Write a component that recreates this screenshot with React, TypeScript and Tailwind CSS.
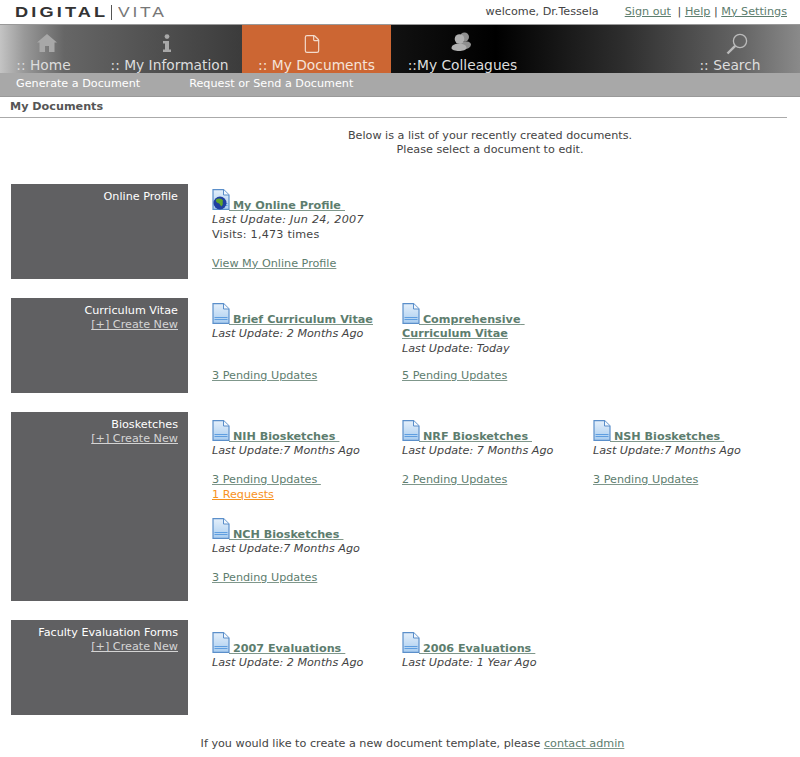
import { File } from 'lucide-react'

// Digital Vita "My Documents" page.

const FONT = "font-['DejaVu_Sans',Verdana,sans-serif]"

function HomeIcon () {
  return (
    <svg viewBox="0 0 20 18" className="ml-[6px] h-[18px] w-[20px] text-[#a8a8a8]" fill="currentColor">
      <path d="M10 0 L20 8.5 L17.5 8.5 L17.5 18 L12 18 L12 12 L8 12 L8 18 L2.5 18 L2.5 8.5 L0 8.5 Z" />
    </svg>
  )
}

function InfoIcon () {
  return (
    <svg viewBox="0 0 10 18" className="mr-[5px] h-[18px] w-[10px] text-[#a8a8a8]" fill="currentColor">
      <circle cx="5" cy="2.6" r="2.4" />
      <path d="M1 7 L7 7 L7 15.5 L9 15.5 L9 18 L1 18 L1 15.5 L3 15.5 L3 9.5 L1 9.5 Z" />
    </svg>
  )
}

function PeopleIcon () {
  return (
    <svg viewBox="0 0 20 20" className="mr-[4px] h-[20px] w-[20px] text-[#b0b0b0]" fill="currentColor">
      <circle cx="13.5" cy="5" r="4.5" fill="#8f8f8f" />
      <path d="M8 12 C9 9 18 8 20 12 C20 16 16 17 14 17 Z" fill="#8f8f8f" />
      <circle cx="8.5" cy="7" r="4.8" />
      <path d="M0.5 16 C0.5 10 15.5 10 15.5 16 C15.5 20 0.5 20 0.5 16 Z" />
    </svg>
  )
}

function SearchIcon () {
  return (
    <svg viewBox="0 0 22 22" className="ml-[14px] h-[22px] w-[22px] text-[#bbb]" fill="none" stroke="currentColor">
      <circle cx="14" cy="8" r="6.6" strokeWidth="1.3" />
      <path d="M9.2 12.8 L1.5 20.5" strokeWidth="2.4" />
    </svg>
  )
}

function DocIcon ({ globe }: { globe?: boolean }) {
  return (
    <svg viewBox="0 0 18 21" className="mr-[-1px] inline h-[21px] w-[18px] align-[-1px]">
      <defs>
        <linearGradient id="docFill" x1="0" y1="0" x2="0" y2="1">
          <stop offset="0" stopColor="#e4effa" />
          <stop offset="1" stopColor="#a9cdf0" />
        </linearGradient>
      </defs>
      <path d="M1 .7 H11.5 L17 6 V20.3 H1 Z" fill="url(#docFill)" stroke="#5b8fca" strokeWidth="1.2" />
      <path d="M11.5 .7 V6 H17" fill="#f3f8fd" stroke="#5b8fca" strokeWidth="1" />
      <path d="M2.5 14.5 H15.5 M2.5 16.5 H15.5" stroke="#5f9ee0" strokeWidth="1" />
      {globe && (
        <g>
          <circle cx="8" cy="14" r="6.5" fill="#1f3fa0" />
          <path d="M4 10.5 C6.5 8.5 10 9.5 11 11.5 C10 13.5 12 15 9.5 17.5 C8 16.5 8 14.5 6 14 C4.5 13.5 3.5 12 4 10.5 Z" fill="#5fa52e" />
        </g>
      )}
    </svg>
  )
}

type Doc = {
  title: string
  update: string
  extra?: string
  links: { text: string; orange?: boolean }[]
  globe?: boolean
  bottom?: boolean // pin links to the row bottom, next to a taller neighbour
}

type Section = {
  name: string
  create: boolean
  height: string
  pad: string
  docs: Doc[]
}

const SECTIONS: Section[] = [
  {
    name: 'Online Profile',
    create: false,
    height: 'min-h-[95px]',
    pad: 'pt-[5px]',
    docs: [
      {
        title: 'My Online Profile ',
        update: 'Last Update: Jun 24, 2007',
        extra: 'Visits: 1,473 times',
        links: [{ text: 'View My Online Profile' }],
        globe: true,
      },
    ],
  },
  {
    name: 'Curriculum Vitae',
    create: true,
    height: 'min-h-[95px]',
    pad: 'pt-[5px]',
    docs: [
      { title: 'Brief Curriculum Vitae', update: 'Last Update: 2 Months Ago', links: [{ text: '3 Pending Updates' }], bottom: true },
      { title: 'Comprehensive Curriculum Vitae', update: 'Last Update: Today', links: [{ text: '5 Pending Updates' }], bottom: true },
    ],
  },
  {
    name: 'Biosketches',
    create: true,
    height: 'min-h-[189px]',
    pad: 'pt-[8px]',
    docs: [
      {
        title: 'NIH Biosketches ',
        update: 'Last Update:7 Months Ago',
        links: [{ text: '3 Pending Updates ' }, { text: '1 Requests', orange: true }],
      },
      { title: 'NRF Biosketches ', update: 'Last Update: 7 Months Ago', links: [{ text: '2 Pending Updates' }] },
      { title: 'NSH Biosketches ', update: 'Last Update:7 Months Ago', links: [{ text: '3 Pending Updates' }] },
      { title: 'NCH Biosketches ', update: 'Last Update:7 Months Ago', links: [{ text: '3 Pending Updates' }] },
    ],
  },
  {
    name: 'Faculty Evaluation Forms',
    create: true,
    height: 'min-h-[95px]',
    pad: 'pt-[12px]',
    docs: [
      { title: '2007 Evaluations ', update: 'Last Update: 2 Months Ago', links: [] },
      { title: '2006 Evaluations ', update: 'Last Update: 1 Year Ago', links: [] },
    ],
  },
]

function DocItem ({ doc }: { doc: Doc }) {
  return (
    <div className="flex h-full flex-col">
      <div className="w-[175px] whitespace-pre-wrap font-bold leading-[14.4px] text-[#5d7d6e] underline decoration-[#7f978b]">
        <DocIcon globe={doc.globe} />
        <a href="#"> {doc.title}</a>
      </div>
      <div className={doc.globe ? 'italic tracking-[0.25px]' : 'italic'}>{doc.update}</div>
      {doc.extra && <div className="tracking-[0.2px]">{doc.extra}</div>}
      {doc.links.length > 0 && (
        <div className={doc.bottom ? 'mt-auto pt-[13px]' : 'pt-[14.4px]'}>
          {doc.links.map(l => (
            <div key={l.text}>
              <a
                href="#"
                className={l.orange ? 'whitespace-pre text-[#f7931e] underline' : 'whitespace-pre text-[#5d7d6e] underline decoration-[#7f978b]'}
              >
                {l.text}
              </a>
            </div>
          ))}
        </div>
      )}
    </div>
  )
}

export default function App () {
  return (
    <div className={`${FONT} h-[757px] w-[800px] overflow-hidden bg-white text-[11.2px] leading-[14.4px] text-[#444]`}>
      {/* top strip */}
      <div className="flex h-[24px] items-center justify-between pl-[15px] pr-[13px]">
        <div className="flex items-center font-['Liberation_Sans',sans-serif] text-[14px]">
          <span className="w-[92px] origin-left scale-x-[1.3] font-bold tracking-[2.4px] text-[#333]">DIGITAL</span>
          <span className="ml-[4px] mr-[6px] h-[15px] w-px bg-[#555]" />
          <span className="origin-left scale-x-[1.25] tracking-[2.2px] text-[#777]">VITA</span>
        </div>
        <div className="flex">
          <span className="mr-[26px]">welcome, Dr.Tessela</span>
          <span>
            <a href="#" className="mr-[3px] text-[#5d7d6e] underline">Sign out</a>
            {' | '}
            <a href="#" className="text-[#5d7d6e] underline">Help</a>
            {' | '}
            <a href="#" className="text-[#5d7d6e] underline">My Settings</a>
          </span>
        </div>
      </div>

      {/* main nav */}
      <nav className="flex h-[49px] border-t border-[#999] bg-[linear-gradient(90deg,#c4c4c4_0%,#999_3%,#666_8%,#3c3c3c_30%,#111_49%,#000_62%,#2e2e2e_78%,#666_93%,#8a8a8a_100%)] text-[13.8px] leading-[16px] text-[#ddd]">
        <div className="flex w-[87px] flex-col items-center pt-[9px]">
          <HomeIcon />
          <span className="mt-[5px] whitespace-pre">:: Home</span>
        </div>
        <div className="flex w-[155px] flex-col items-center pl-[10px] pt-[9px]">
          <InfoIcon />
          <span className="mt-[5px] whitespace-pre">:: My Information</span>
        </div>
        <div className="flex w-[149px] flex-col items-center bg-[#cc6633] pt-[9px] text-[#f5e3d8]">
          <File className="mr-[9px] h-[20px] w-[20px] text-[#f3dccd]" strokeWidth={1.4} />
          <span className="mt-[3px] whitespace-pre">:: My Documents</span>
        </div>
        <div className="flex w-[140px] flex-col items-center pl-[3px] pt-[7px]">
          <PeopleIcon />
          <span className="mt-[5px] whitespace-pre">::My Colleagues</span>
        </div>
        <div className="ml-auto flex w-[140px] flex-col items-center pt-[8px]">
          <SearchIcon />
          <span className="mt-[2px] whitespace-pre">:: Search</span>
        </div>
      </nav>

      {/* sub nav */}
      <div className="flex h-[24px] items-center gap-[49px] border-b border-[#999] bg-[#a8a8a8] pl-[16px] text-white">
        <a href="#">Generate a Document</a>
        <a href="#">Request or Send a Document</a>
      </div>

      <div className="mr-[13px] flex h-[21px] items-center border-b border-[#aaa] pl-[10px] font-bold text-[#555]">
        My Documents
      </div>

      <div className="mb-[27px] ml-[190px] mt-[11px] w-[600px] text-center leading-[14px]">
        Below is a list of your recently created documents.
        <br />
        Please select a document to edit.
      </div>

      <div className="flex flex-col gap-[19px] pl-[11px]">
        {SECTIONS.map(s => (
          <section key={s.name} className={`flex ${s.height}`}>
            <div className="w-[177px] shrink-0 bg-[#606062] pr-[10px] pt-[6px] text-right text-white">
              <div>{s.name}</div>
              {s.create && <a href="#" className="text-[#d4d4d4] underline">[+] Create New</a>}
            </div>
            <div className={`grid grid-cols-[190px_191px_190px] content-start gap-y-[16px] pl-[24px] ${s.pad}`}>
              {s.docs.map(d => <DocItem key={d.title} doc={d} />)}
            </div>
          </section>
        ))}
      </div>

      <div className="mt-[22px] pl-[25px] text-center">
        If you would like to create a new document template, please{' '}
        <a href="#" className="text-[#5d7d6e] underline decoration-[#7f978b]">contact admin</a>
      </div>
    </div>
  )
}
